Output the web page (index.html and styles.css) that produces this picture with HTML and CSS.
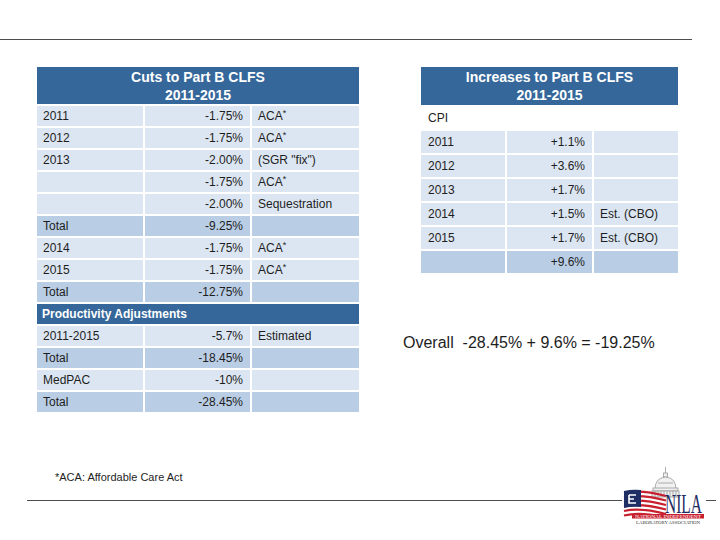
FILE: index.html
```html
<!DOCTYPE html>
<html>
<head>
<meta charset="utf-8">
<link rel="stylesheet" href="styles.css">
</head>
<body>
<div class="page">
  <div class="rule-top"></div>
  <main class="content">
    <section class="left-col">
      <div class="tbl tbl-left">
        <div class="hd span3">Cuts to Part B CLFS<br>2011-2015</div>
        <div class="c">2011</div><div class="c r">-1.75%</div><div class="c">ACA<sup>*</sup></div>
        <div class="c">2012</div><div class="c r">-1.75%</div><div class="c">ACA<sup>*</sup></div>
        <div class="c">2013</div><div class="c r">-2.00%</div><div class="c">(SGR "fix")</div>
        <div class="c"></div><div class="c r">-1.75%</div><div class="c">ACA<sup>*</sup></div>
        <div class="c"></div><div class="c r">-2.00%</div><div class="c">Sequestration</div>
        <div class="c t">Total</div><div class="c t r">-9.25%</div><div class="c t"></div>
        <div class="c">2014</div><div class="c r">-1.75%</div><div class="c">ACA<sup>*</sup></div>
        <div class="c">2015</div><div class="c r">-1.75%</div><div class="c">ACA<sup>*</sup></div>
        <div class="c t">Total</div><div class="c t r">-12.75%</div><div class="c t"></div>
        <div class="sub span3">Productivity Adjustments</div>
        <div class="c">2011-2015</div><div class="c r">-5.7%</div><div class="c">Estimated</div>
        <div class="c t">Total</div><div class="c t r">-18.45%</div><div class="c t"></div>
        <div class="c">MedPAC</div><div class="c r">-10%</div><div class="c"></div>
        <div class="c t">Total</div><div class="c t r">-28.45%</div><div class="c t"></div>
      </div>
      <p class="note">*ACA: Affordable Care Act</p>
    </section>
    <section class="right-col">
      <div class="tbl tbl-right">
        <div class="hd span3">Increases to Part B CLFS<br>2011-2015</div>
        <div class="cpi span3">CPI</div>
        <div class="c">2011</div><div class="c r">+1.1%</div><div class="c"></div>
        <div class="c">2012</div><div class="c r">+3.6%</div><div class="c"></div>
        <div class="c">2013</div><div class="c r">+1.7%</div><div class="c"></div>
        <div class="c">2014</div><div class="c r">+1.5%</div><div class="c">Est. (CBO)</div>
        <div class="c">2015</div><div class="c r">+1.7%</div><div class="c">Est. (CBO)</div>
        <div class="c t"></div><div class="c t r">+9.6%</div><div class="c t"></div>
      </div>
      <p class="overall">Overall&nbsp;&nbsp;-28.45% + 9.6% = -19.25%</p>
    </section>
  </main>
  <div class="rule-bottom"></div>
  <svg class="logo" width="84" height="60" viewBox="0 0 84 60" xmlns="http://www.w3.org/2000/svg">
    <rect x="0" y="0" width="84" height="60" fill="#ffffff"/>
    <!-- capitol dome -->
    <g stroke="#9a9a9a" stroke-width="0.8" fill="#f1f1f1">
      <line x1="43.5" y1="2" x2="43.5" y2="9"/>
      <rect x="41.5" y="8" width="4" height="4"/>
      <path d="M33 24 Q33 13 43.5 12 Q54 13 54 24 Z"/>
      <rect x="31" y="23" width="25" height="3"/>
      <rect x="30" y="26" width="27" height="6"/>
      <path d="M33 26 V32 M36 26 V32 M39 26 V32 M42 26 V32 M45 26 V32 M48 26 V32 M51 26 V32 M54 26 V32" fill="none"/>
      <path d="M36 18 H51" fill="none"/>
    </g>
    <!-- flag -->
    <g fill="none" stroke="#c8202f" stroke-width="2.2">
      <path d="M2 28 Q18 24 44 31"/>
      <path d="M2 32.5 Q18 28.5 44 35.5"/>
      <path d="M2 37 Q18 33 44 40"/>
      <path d="M2 41.5 Q18 37.5 44 44.5"/>
      <path d="M2 46 Q18 42 44 49"/>
      <path d="M2 50.5 Q18 46.5 40 52"/>
    </g>
    <path d="M2 26 Q10 24 19 25 V42 Q10 41 2 43 Z" fill="#1f2f66"/>
    <path d="M7 30 H14 M7 30 V38 H14 M7 34 H12" stroke="#ffffff" stroke-width="1.6" fill="none"/>
    <!-- wordmark -->
    <text transform="translate(43 47.5) scale(1 1.75)" font-family="Liberation Serif, serif" font-size="15.5" fill="#1e2b62">NILA</text>
    <rect x="10" y="49" width="72" height="4.5" fill="#c8202f"/>
    <text x="13" y="52.6" font-family="Liberation Serif, serif" font-size="3.6" fill="#ffffff" textLength="66" lengthAdjust="spacingAndGlyphs">NATIONAL INDEPENDENT</text>
    <text x="14" y="58.5" font-family="Liberation Serif, serif" font-size="3.6" fill="#333333" textLength="64" lengthAdjust="spacingAndGlyphs">LABORATORY ASSOCIATION</text>
  </svg>
</div>
</body>
</html>
```

FILE: styles.css
```css
html, body {
  margin: 0;
  padding: 0;
  background: #ffffff;
}

.page {
  position: relative;
  width: 720px;
  height: 540px;
  overflow: hidden;
  font-family: "Liberation Sans", Arial, sans-serif;
  color: #1e1e1e;
}

.rule-top {
  margin-top: 39px;
  width: 692px;
  height: 1px;
  background: #4d4d4d;
}

.content {
  display: flex;
  align-items: flex-start;
  box-sizing: border-box;
  height: 433px;
  margin-top: 27px;
  padding-left: 37px;
}

.left-col {
  width: 322px;
  display: flex;
  flex-direction: column;
}

.right-col {
  margin-left: 44px;
  display: flex;
  flex-direction: column;
}

.tbl {
  display: grid;
  row-gap: 2px;
  font-size: 12px;
}

.tbl-left {
  grid-template-columns: 106px 105px 107px;
  grid-template-rows: 37px;
  column-gap: 2px;
  grid-auto-rows: 20px;
}

.tbl-right {
  margin-left: 18px;
  grid-template-columns: 84px 85px 84px;
  grid-template-rows: 38px;
  column-gap: 2px;
  grid-auto-rows: 22px;
}

.span3 {
  grid-column: 1 / 4;
}

.hd {
  background: #35679a;
  color: #ffffff;
  font-weight: bold;
  font-size: 14px;
  line-height: 18px;
  text-align: center;
  padding-top: 1px;
  box-sizing: border-box;
}

.sub {
  background: #35679a;
  color: #ffffff;
  font-weight: bold;
  font-size: 12px;
  line-height: 20px;
  padding-left: 5px;
}

.c {
  background: #dce6f2;
  padding: 0 6px;
  line-height: 20px;
  white-space: nowrap;
}

.tbl-right .c {
  line-height: 22px;
  padding: 0 7px;
}

.tbl-right .c:nth-child(3n+2) {
  padding-left: 6px;
}

.c.t {
  background: #b9cde5;
}

.c.r {
  text-align: right;
  padding-right: 7px;
}

.c sup {
  font-size: 9px;
  line-height: 0;
  vertical-align: 4px;
}

.cpi {
  line-height: 22px;
  padding-left: 7px;
}

.note {
  margin: 59px 0 0 18px;
  font-size: 11px;
  line-height: 13px;
}

.overall {
  margin: 61px 0 0 0;
  font-size: 16px;
  line-height: 18px;
}

.rule-bottom {
  margin-left: 27px;
  width: 689px;
  height: 1px;
  background: #4d4d4d;
}

.logo {
  position: absolute;
  left: 622px;
  top: 465px;
  display: block;
}
```
